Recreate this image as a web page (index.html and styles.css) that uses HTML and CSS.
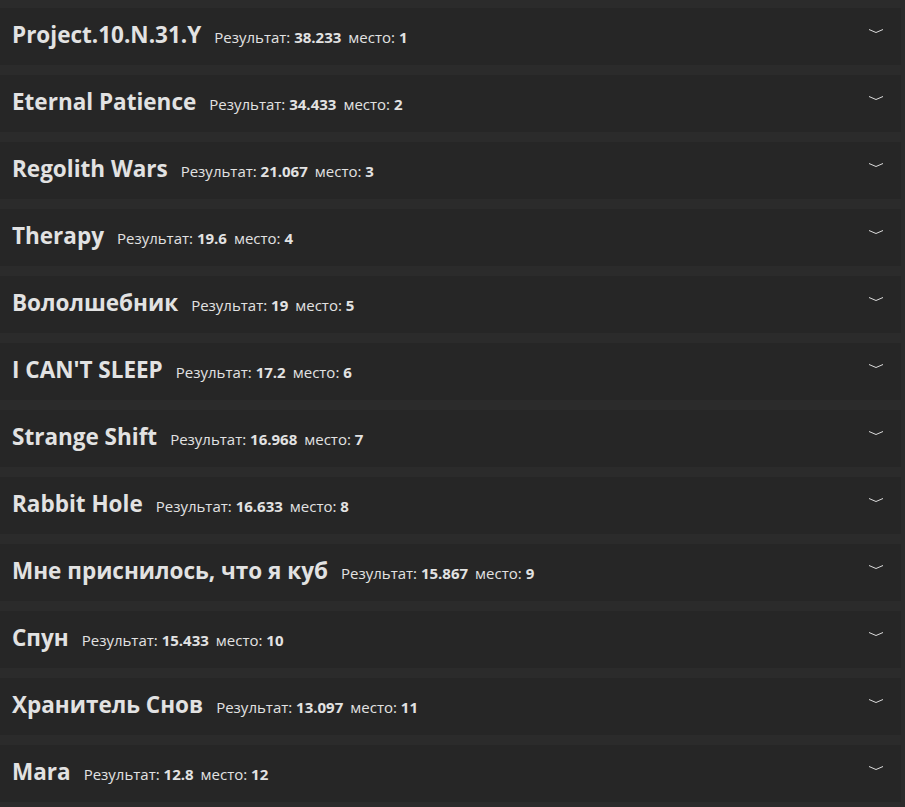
FILE: index.html
```html
<!DOCTYPE html>
<html lang="ru">
<head>
<meta charset="utf-8">
<link rel="stylesheet" href="styles.css">
</head>
<body>
<div class="list">
  <div class="item"><h3 class="title">Project.10.N.31.Y</h3><span class="meta">Результат: <b>38.233</b></span><span class="meta">место: <b>1</b></span><svg class="chev" width="14" height="4" viewBox="0 0 14 4"><polyline points="0,0.5 7,3.5 14,0.5"/></svg></div>
  <div class="item"><h3 class="title">Eternal Patience</h3><span class="meta">Результат: <b>34.433</b></span><span class="meta">место: <b>2</b></span><svg class="chev" width="14" height="4" viewBox="0 0 14 4"><polyline points="0,0.5 7,3.5 14,0.5"/></svg></div>
  <div class="item"><h3 class="title">Regolith Wars</h3><span class="meta">Результат: <b>21.067</b></span><span class="meta">место: <b>3</b></span><svg class="chev" width="14" height="4" viewBox="0 0 14 4"><polyline points="0,0.5 7,3.5 14,0.5"/></svg></div>
  <div class="item"><h3 class="title">Therapy</h3><span class="meta">Результат: <b>19.6</b></span><span class="meta">место: <b>4</b></span><svg class="chev" width="14" height="4" viewBox="0 0 14 4"><polyline points="0,0.5 7,3.5 14,0.5"/></svg></div>
  <div class="item"><h3 class="title">Вололшебник</h3><span class="meta">Результат: <b>19</b></span><span class="meta">место: <b>5</b></span><svg class="chev" width="14" height="4" viewBox="0 0 14 4"><polyline points="0,0.5 7,3.5 14,0.5"/></svg></div>
  <div class="item"><h3 class="title">I CAN'T SLEEP</h3><span class="meta">Результат: <b>17.2</b></span><span class="meta">место: <b>6</b></span><svg class="chev" width="14" height="4" viewBox="0 0 14 4"><polyline points="0,0.5 7,3.5 14,0.5"/></svg></div>
  <div class="item"><h3 class="title">Strange Shift</h3><span class="meta">Результат: <b>16.968</b></span><span class="meta">место: <b>7</b></span><svg class="chev" width="14" height="4" viewBox="0 0 14 4"><polyline points="0,0.5 7,3.5 14,0.5"/></svg></div>
  <div class="item"><h3 class="title">Rabbit Hole</h3><span class="meta">Результат: <b>16.633</b></span><span class="meta">место: <b>8</b></span><svg class="chev" width="14" height="4" viewBox="0 0 14 4"><polyline points="0,0.5 7,3.5 14,0.5"/></svg></div>
  <div class="item"><h3 class="title">Мне приснилось, что я куб</h3><span class="meta">Результат: <b>15.867</b></span><span class="meta">место: <b>9</b></span><svg class="chev" width="14" height="4" viewBox="0 0 14 4"><polyline points="0,0.5 7,3.5 14,0.5"/></svg></div>
  <div class="item"><h3 class="title">Спун</h3><span class="meta">Результат: <b>15.433</b></span><span class="meta">место: <b>10</b></span><svg class="chev" width="14" height="4" viewBox="0 0 14 4"><polyline points="0,0.5 7,3.5 14,0.5"/></svg></div>
  <div class="item"><h3 class="title">Хранитель Снов</h3><span class="meta">Результат: <b>13.097</b></span><span class="meta">место: <b>11</b></span><svg class="chev" width="14" height="4" viewBox="0 0 14 4"><polyline points="0,0.5 7,3.5 14,0.5"/></svg></div>
  <div class="item"><h3 class="title">Mara</h3><span class="meta">Результат: <b>12.8</b></span><span class="meta">место: <b>12</b></span><svg class="chev" width="14" height="4" viewBox="0 0 14 4"><polyline points="0,0.5 7,3.5 14,0.5"/></svg></div>
</div>
</body>
</html>
```
FILE: styles.css
```css
html, body {
  margin: 0;
  padding: 0;
  background: #2b2b2b;
}
body {
  font-family: "Open Sans", "Noto Sans", sans-serif;
  color: #e2e2e2;
}
.list {
  display: flex;
  flex-direction: column;
  gap: 10px;
  padding-top: 8px;
  width: 901px;
}
.item {
  display: flex;
  align-items: baseline;
  height: 57px;
  box-sizing: border-box;
  padding: 0 18px 0 12px;
  background: #262626;
  line-height: 53px;
}
.title {
  margin: 0 13px 0 0;
  font-size: 22.5px;
  font-weight: 700;
  color: #e2e2e2;
}
.meta {
  font-size: 15px;
  margin-right: 7px;
}
.meta b {
  font-weight: 700;
}
.chev {
  margin-left: auto;
  align-self: flex-start;
  margin-top: 21px;
  fill: none;
  stroke: #dcdcdc;
  stroke-width: 1;
}
```
